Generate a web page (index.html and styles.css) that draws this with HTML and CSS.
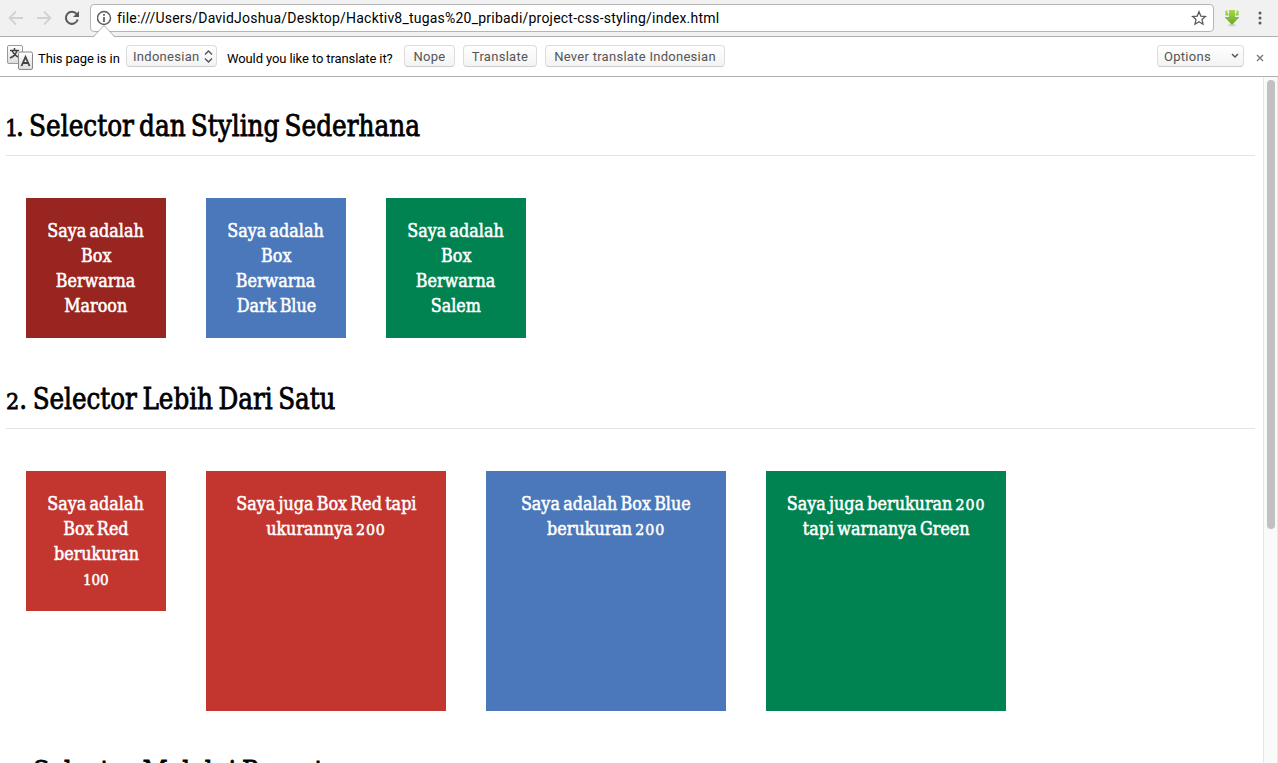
FILE: index.html
```html
<!DOCTYPE html>
<html lang="id">
<head>
<meta charset="utf-8">
<title>CSS Styling</title>
<link rel="stylesheet" href="styles.css">
</head>
<body>
<header class="toolbar">
  <svg class="nav" width="84" height="36" viewBox="0 0 84 36" fill="none">
    <path d="M23 18H10M16 11.5L9.500 18L16 24.500" stroke="#d2d2d2" stroke-width="1.800"/>
    <path d="M37 18H50M44 11.500L50.500 18L44 24.500" stroke="#d2d2d2" stroke-width="1.800"/>
    <path d="M76.700 14.200A6 6 0 1 0 77.700 19.500" stroke="#5a5a5a" stroke-width="2"/>
    <path d="M79 11V17H73Z" fill="#5a5a5a"/>
  </svg>
  <div class="address">
    <svg class="info" width="16" height="16" viewBox="0 0 16 16" fill="none" stroke="#5a5a5a">
      <circle cx="7" cy="8" r="6.500" stroke-width="1.400"/>
      <path d="M7 7V12M7 4V5.800" stroke-width="1.700"/>
    </svg>
    <span class="url">file:///Users/DavidJoshua/Desktop/Hacktiv8_tugas%20_pribadi/project-css-styling/index.html</span>
    <svg class="star" width="16" height="16" viewBox="0 0 16 16"><path d="M8 1.800L9.800 6.100L14.500 6.500L11 9.600L12 14.200L8 11.700L4 14.200L5 9.600L1.500 6.500L6.200 6.100Z" fill="none" stroke="#5a5a5a" stroke-width="1.300"/></svg>
  </div>
  <svg class="download" width="16" height="18" viewBox="0 0 16 18">
    <defs><linearGradient id="leaf" x2="0" y2="1"><stop stop-color="#a8d64b"/><stop offset="1" stop-color="#62ab25"/></linearGradient></defs>
    <ellipse cx="8" cy="16.300" rx="4" ry="1" fill="#d0d0d0"/>
    <path d="M5 1H11V8H15.500L8 16L.5 8H5ZM1.500 1.500H3.500V4.500H4.500V6.500H1.500ZM12.500 1.500H14.500V6.500H11.500V4.500H12.500Z" fill="url(#leaf)"/>
  </svg>
  <svg class="more" width="4" height="14" viewBox="0 0 4 14" fill="#5a5a5a"><circle cx="2" cy="2" r="1.500"/><circle cx="2" cy="7" r="1.500"/><circle cx="2" cy="12" r="1.500"/></svg>
</header>
<div class="infobar">
  <svg class="pointer" width="24" height="14" viewBox="0 0 24 14"><path d="M0 13.500H1.500L12 1.500L22.500 13.500H24V14H0Z" fill="#fff"/><path d="M0 12.500H1.500L12 1.500L22.500 12.500H24" fill="none" stroke="#b0b0b0"/></svg>
  <svg class="languages" width="28" height="27" viewBox="0 0 28 27">
    <defs><linearGradient id="key" x2="0" y2="1"><stop stop-color="#fff"/><stop offset="1" stop-color="#ddd"/></linearGradient></defs>
    <rect x="1.500" y="1.500" width="15" height="18" rx="1.500" fill="url(#key)" stroke="#999"/>
    <path d="M4 6.500H13M8.500 4V6.500M11 6.500Q9.500 12 4 14M6 6.500Q8 11 13 13.500" fill="none" stroke="#444" stroke-width="1.500"/>
    <rect x="12.500" y="8" width="14" height="17.500" rx="1.500" fill="url(#key)" stroke="#888"/>
    <path d="M15.500 22L19.500 13L23.500 22M17 19H22.100" fill="none" stroke="#444" stroke-width="1.800"/>
  </svg>
  <span class="message message-page">This page is in</span>
  <span class="button language"><span>Indonesian</span><svg width="9" height="13" viewBox="0 0 9 13"><path d="M1 4.500L4.500 1L8 4.500M1 8.500L4.500 12L8 8.500" fill="none" stroke="#555" stroke-width="1.400"/></svg></span>
  <span class="message message-ask">Would you like to translate it?</span>
  <span class="button nope">Nope</span>
  <span class="button translate">Translate</span>
  <span class="button never">Never translate Indonesian</span>
  <span class="button options"><span>Options</span><svg width="8" height="6" viewBox="0 0 8 6"><path d="M1 1L4 4L7 1" fill="none" stroke="#555" stroke-width="1.500"/></svg></span>
  <svg class="close" width="8" height="8" viewBox="0 0 8 8"><path d="M1 1L7 7M7 1L1 7" stroke="#777" stroke-width="1.400"/></svg>
</div>
<div class="viewport">
  <main>
    <section>
      <h1><span class="title title-first"><span class="num">1</span>. Selector dan Styling Sederhana</span></h1>
      <div class="row">
        <div class="box maroon"><span>Saya adalah</span><span>Box</span><span>Berwarna</span><span>Maroon</span></div>
        <div class="box blue"><span>Saya adalah</span><span>Box</span><span>Berwarna</span><span>Dark Blue</span></div>
        <div class="box green"><span>Saya adalah</span><span>Box</span><span>Berwarna</span><span>Salem</span></div>
      </div>
    </section>
    <section>
      <h1><span class="title"><span class="num">2</span>. Selector Lebih Dari Satu</span></h1>
      <div class="row">
        <div class="box red"><span>Saya adalah</span><span>Box Red</span><span>berukuran</span><span><span class="num">100</span></span></div>
        <div class="box large red"><span>Saya juga Box Red tapi</span><span>ukurannya <span class="num wide">200</span></span></div>
        <div class="box large blue"><span>Saya adalah Box Blue</span><span>berukuran <span class="num wide">200</span></span></div>
        <div class="box large green"><span>Saya juga berukuran <span class="num wide">200</span></span><span>tapi warnanya Green</span></div>
      </div>
    </section>
    <section>
      <h1><span class="title"><span class="num">3</span>. Selector Melalui Parent</span></h1>
    </section>
  </main>
  <div class="scrollbar"><div class="thumb"></div></div>
</div>
</body>
</html>
```
FILE: styles.css
```css
* { box-sizing: border-box; }
body { margin: 0; height: 763px; overflow: hidden; background: #fff; font-family: Roboto, sans-serif; color: #000; }
svg { display: block; flex: none; }
.toolbar { display: flex; align-items: center; height: 37px; background: #f1f1f1; border-bottom: 1px solid #b0b0b0; }
.nav { margin-right: 6px; }
.address { display: flex; align-items: center; width: 1124px; height: 28px; padding: 0 6px; background: #fff; border: 1px solid #b5b5b5; border-radius: 4px; }
.url { margin-left: 4px; font-size: 14px; white-space: nowrap; letter-spacing: 0.215px; }
.star { margin-left: auto; }
.download { margin-left: 10px; }
.more { margin-left: 18px; }
.infobar { position: relative; display: flex; height: 40px; padding: 7px 14px 0 6px; border-bottom: 1px solid #b0b0b0; background: #fff; }
.pointer { position: absolute; left: 92px; top: -13px; }
.message { margin-top: 7px; font-size: 13px; line-height: 16px; letter-spacing: -0.1px; white-space: nowrap; }
.message-page { width: 88px; margin-left: 4px; }
.message-ask { width: 177px; margin-left: 10px; }
.button { display: flex; align-items: center; justify-content: center; flex: none; height: 22px; margin-top: 1px; border: 1px solid #ddd; border-bottom-color: #ccc; border-radius: 4px; background: linear-gradient(#fff, #f3f3f3); color: #555; font-size: 13px; letter-spacing: 0.28px; white-space: nowrap; }
.language { width: 91px; padding: 0 3px 0 6px; justify-content: space-between; }
.nope { width: 51px; }
.translate { width: 74px; margin-left: 8px; }
.never { width: 180px; margin-left: 8px; }
.options { width: 87px; margin-left: auto; padding: 0 4px 0 6px; justify-content: space-between; }
.close { margin: 10px 0 0 12px; }
.viewport { display: flex; height: 686px; overflow: hidden; }
main { flex: 1; padding: 21px 8px 0 6px; }
.scrollbar { width: 15px; padding: 3px 3px 0; border-left: 1px solid #e6e6e6; border-right: 1px solid #e6e6e6; background: #fafafa; }
.thumb { width: 8px; height: 449px; border-radius: 4px; background: #c1c1c1; }
section { height: 273px; }
section + section { height: 373px; }
h1 { height: 58px; margin: 0; border-bottom: 1px solid #e4e4e4; font: 400 30.5px/56px "DejaVu Serif Condensed", "DejaVu Serif", serif; font-stretch: condensed; }
.title { display: inline-block; white-space: nowrap; word-spacing: -2.5px; transform: scaleX(0.898); transform-origin: left; -webkit-text-stroke: 0.8px #000; }
.title-first { margin-left: -1px; word-spacing: -3px; transform: scaleX(0.903); }
.title-first .num { letter-spacing: -2.5px; }
.num { font-family: "DejaVu Serif", serif; font-stretch: normal; font-size: 0.76em; line-height: 1; }
.wide { font-size: 0.8em; letter-spacing: 1px; margin-right: -1px; }
.row { display: flex; gap: 40px; padding: 42px 20px 0; }
.box { display: flex; flex-direction: column; align-items: center; width: 140px; height: 140px; padding-top: 20px; color: #fff; font: 19px/25px "DejaVu Serif Condensed", "DejaVu Serif", serif; font-stretch: condensed; white-space: nowrap; }
.box > span { height: 25px; word-spacing: -2px; transform: scaleX(0.935); -webkit-text-stroke: 0.55px #fff; }
.large { width: 240px; height: 240px; }
.maroon { background: #992520; }
.blue { background: #4a78ba; }
.green { background: #008351; }
.red { background: #c33630; }
```
